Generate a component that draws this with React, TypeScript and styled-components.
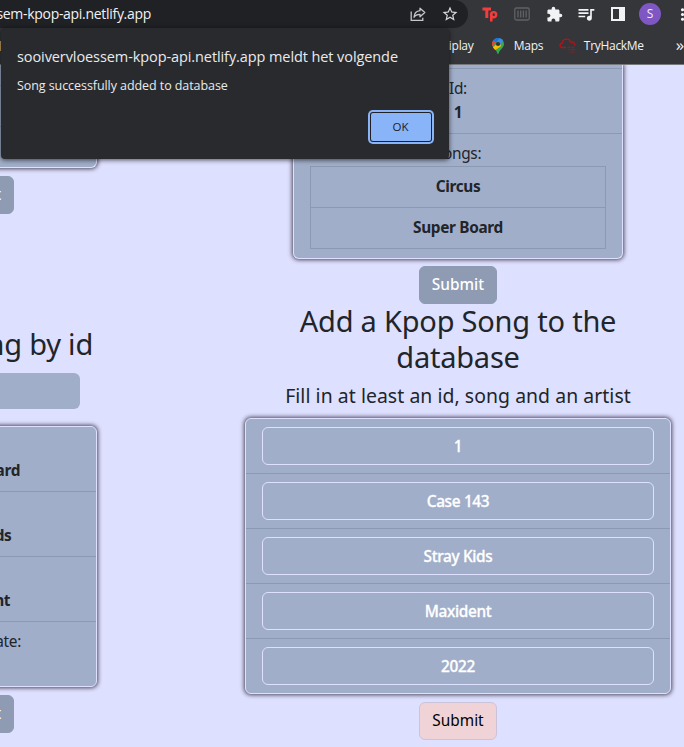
import React from "react";
import styled, { createGlobalStyle } from "styled-components";
import { MdExtension, MdMoreVert, MdQueueMusic, MdStarBorder } from "react-icons/md";

const GlobalStyle = createGlobalStyle`
  * { box-sizing: border-box; }
  body { margin: 0; overflow: hidden; background: #dee0ff; }
`;

const chromeFont = `"Open Sans", "Noto Sans", sans-serif`;
const pageFont = `"Noto Sans", "Open Sans", sans-serif`;

const Window = styled.div`
  position: relative;
  width: 684px;
  height: 747px;
  overflow: hidden;
  display: flex;
  flex-direction: column;
  background: #dee0ff;
`;

/* Browser chrome */

const Header = styled.header`
  flex: none;
  height: 65px;
  background: #35363a;
  border-bottom: 1px solid #77787d;
  font-family: ${chromeFont};
  overflow: hidden;
`;

const Toolbar = styled.div`
  display: flex;
  height: 28px;
`;

const AddressBar = styled.div`
  flex: none;
  display: flex;
  align-items: center;
  width: 468px;
  height: 28px;
  padding-right: 2px;
  margin-right: 6px;
  background: #202124;
  border-radius: 0 14px 14px 0;
`;

const Url = styled.div`
  display: flex;
  justify-content: flex-end;
  width: 151px;
  margin-right: auto;
  color: #f1f3f4;
  font-size: 14px;
  line-height: 28px;
  letter-spacing: -0.3px;
  white-space: nowrap;
`;

const IconSlot = styled.div<{ $color?: string }>`
  flex: none;
  display: flex;
  align-items: center;
  justify-content: center;
  width: 32px;
  height: 28px;
  color: ${(p) => p.$color ?? "#f1f3f4"};
  svg { flex: none; display: block; }
`;

const Avatar = styled.div`
  width: 22px;
  height: 22px;
  border-radius: 50%;
  background: #7e57c2;
  color: #f1ecfa;
  font-size: 12px;
  line-height: 22px;
  text-align: center;
`;

const BookmarkBar = styled.nav`
  display: flex;
  align-items: center;
  height: 36px;
  color: #f1f3f4;
  font-size: 12px;
  line-height: 16px;
  letter-spacing: -0.3px;
  white-space: nowrap;
`;

const FolderEdge = styled.span`
  width: 1px;
  height: 10px;
  margin-right: 448px;
  background: #c9a25c;
`;

const Bookmark = styled.span<{ $width: number }>`
  flex: none;
  display: flex;
  align-items: center;
  width: ${(p) => p.$width}px;
  svg { flex: none; display: block; }
`;

const BookmarkName = styled.span<{ $gap?: number }>`
  margin-left: ${(p) => p.$gap ?? 0}px;
`;

const Overflow = styled.span`
  font-size: 17px;
  line-height: 16px;
  margin-top: -3px;
`;

/* Alert */

const Dialog = styled.section`
  position: absolute;
  z-index: 2;
  left: 1px;
  top: 28px;
  width: 448px;
  height: 131px;
  padding: 18px 15px 14px 16px;
  display: flex;
  flex-direction: column;
  background: #292a2d;
  border-radius: 4px;
  box-shadow: 0 1px 5px rgba(0, 0, 0, 0.65);
  color: #e8eaed;
  font-family: ${chromeFont};
`;

const DialogTitle = styled.h1`
  margin: 0;
  font-size: 14.5px;
  font-weight: 400;
  line-height: 22px;
  letter-spacing: -0.09px;
  white-space: nowrap;
`;

const DialogText = styled.p`
  margin: 9px 0 0;
  font-size: 12.5px;
  line-height: 18px;
  letter-spacing: -0.07px;
`;

const OkButton = styled.button`
  width: 60px;
  height: 28px;
  margin: auto 3px 4px auto;
  padding: 0 1px 0 0;
  border: 0;
  border-radius: 2px;
  background: #8ab4f8;
  box-shadow: 0 0 0 1px #202124, 0 0 0 3px #8ab4f8;
  color: #202124;
  font: 400 11.5px/28px ${chromeFont};
`;

/* Page */

const Page = styled.main`
  flex: 1;
  min-height: 0;
  display: flex;
  overflow: hidden;
  color: #212529;
  font-family: ${pageFont};
  font-size: 15.4px;
  line-height: 24px;
`;

const LeftColumn = styled.div`
  flex: none;
  width: 97px;
  display: flex;
  flex-direction: column;
  align-items: flex-end;
`;

const RightColumn = styled.div`
  flex: none;
  width: 426px;
  margin-left: 148px;
  display: flex;
  flex-direction: column;
  align-items: center;
`;

const Card = styled.div<{ $width: number; $cutTop?: boolean }>`
  flex: none;
  width: ${(p) => p.$width}px;
  overflow: hidden;
  background: #a1aec9;
  border: 1px solid #dee0ff;
  border-top-width: ${(p) => (p.$cutTop ? 0 : 1)}px;
  border-radius: ${(p) => (p.$cutTop ? "0 0 6px 6px" : "6px")};
  box-shadow: 0 0 4px 1px rgba(38, 30, 45, 0.8);
`;

const Row = styled.div<{ $height: number }>`
  height: ${(p) => p.$height}px;
  padding: 8px 16px;
  text-align: center;
  border-bottom: 1px solid #8b99b3;
  white-space: nowrap;
  &:last-child { border-bottom: 0; }
`;

const BlankRow = styled(Row)`
  padding: 0;
`;

const Label = styled.div`
  height: 24px;
  letter-spacing: -0.3px;
`;

const Value = styled(Label)`
  font-weight: 700;
`;

const SongTable = styled.div`
  display: flex;
  flex-direction: column;
  border: 1px solid #8b99b3;
`;

const SongRow = styled.div`
  height: 41px;
  line-height: 40px;
  font-weight: 700;
  letter-spacing: -0.34px;
  border-bottom: 1px solid #8b99b3;
  &:last-child { height: 40px; border-bottom: 0; }
`;

const Button = styled.button<{ $pink?: boolean; $top: number }>`
  flex: none;
  width: 78px;
  height: 38px;
  margin: ${(p) => p.$top}px 0 0;
  padding: 0;
  border: 1px solid ${(p) => (p.$pink ? "#cdc3d8" : "#8e9bb2")};
  border-radius: 6px;
  background: ${(p) => (p.$pink ? "#efd3d7" : "#8e9bb2")};
  color: ${(p) => (p.$pink ? "#000" : "#fff")};
  font: ${(p) => (p.$pink ? 400 : 500)} 15.4px/36px ${pageFont};
`;

const LeftButton = styled(Button)`
  margin-right: 83px;
`;

const Heading = styled.h2<{ $top: number; $right?: number }>`
  flex: none;
  margin: ${(p) => p.$top}px ${(p) => p.$right ?? 0}px 0 0;
  font-size: 29px;
  font-weight: 400;
  line-height: 36px;
  letter-spacing: -0.22px;
  text-align: center;
  white-space: nowrap;
`;

const Subheading = styled.h5`
  margin: 9px 0 10px;
  font-size: 19.4px;
  font-weight: 400;
  line-height: 24px;
  letter-spacing: 0.06px;
  white-space: nowrap;
`;

const IdField = styled.div`
  flex: none;
  width: 160px;
  height: 36px;
  margin: 11px 17px 17px 0;
  border-radius: 6px;
  background: #a1aec9;
`;

const Field = styled.input`
  display: block;
  width: 100%;
  height: 38px;
  padding: 0;
  border: 1px solid #dee0ff;
  border-radius: 6px;
  background: transparent;
  color: #fff;
  font: 500 15.4px/24px ${pageFont};
  letter-spacing: -0.35px;
  -webkit-text-stroke: 0.3px #fff;
  text-align: center;
`;

function ShareIcon() {
  return (
    <svg width="16" height="16" viewBox="0 0 16 16" fill="none" stroke="#c4c7ca" strokeWidth="1.3">
      <path d="M1.2 5.5v8.8h11.6v-2.6" />
      <path d="M10 2.2l4.8 4.3-4.8 4.3V8.3C7 8.3 5.2 9.2 4 11.3 4.3 7.5 6.5 5 10 4.7z" strokeLinejoin="round" />
    </svg>
  );
}

function TypeLogo() {
  return (
    <svg width="16" height="16" viewBox="0 0 16 16" fill="none" stroke="#f33c3c" strokeWidth="3">
      <path d="M.5 3h8.5M4.8 3v9" />
      <path d="M9.3 15.5V7" strokeWidth="2.6" />
      <circle cx="11.6" cy="8.7" r="2.6" strokeWidth="2.4" />
    </svg>
  );
}

function BarsIcon() {
  return (
    <svg width="16" height="14" viewBox="0 0 16 14" fill="none" stroke="#606165" strokeWidth="1.3">
      <rect x=".8" y="1" width="14.4" height="12" rx="1.5" />
      <path d="M4 3.5v7M6.7 3.5v7M9.4 3.5v7M12.1 3.5v7" />
    </svg>
  );
}

function SidePanelIcon() {
  return (
    <svg width="14" height="14" viewBox="0 0 14 14">
      <path fill="#f1f3f4" fillRule="evenodd" d="M0 0h14v14H0zM2 2v10h6V2z" />
    </svg>
  );
}

function MapPin() {
  return (
    <svg width="12" height="16" viewBox="0 0 12 16">
      <path fill="#34a853" d="M6 0a6 6 0 0 1 6 6c0 4-4.5 5.5-5.3 9.3-.2.9-1.2.9-1.4 0C4.5 11.5 0 10 0 6a6 6 0 0 1 6-6z" />
      <path fill="#fbbc04" d="M.9 9.200L8 3.200l1 5L3.300 12C2.500 11 1.500 10.300.9 9.200z" />
      <path fill="#ea4335" d="M1.400 2.200L4 4.400.5 8.300A6 6 0 0 1 1.400 2.200z" />
      <path fill="#1a73e8" d="M1.400 2.200A6 6 0 0 1 7.800.3L4 4.600z" />
      <path fill="#4285f4" d="M7.800.3a6 6 0 0 1 3.400 2.800L7.800 7.200 6 3z" />
      <circle cx="6" cy="6" r="2.1" fill="#303236" />
    </svg>
  );
}

function CloudLogo() {
  return (
    <svg width="17" height="16" viewBox="0 0 17 16" fill="none" stroke="#b3141b" strokeWidth="1.3">
      <path d="M7 9.500H3.500C.3 9.500.1 5.500 3.300 5.200 3.300.2 10.600-.3 11.300 4c3-.6 4.800 1.200 4.200 3.700" />
      <path d="M8.500 9.300h3M12.500 9.300h3M9 11.700h2M12 11.700h4M10 14h1.500M12.500 14h3" strokeWidth="1" opacity=".75" />
    </svg>
  );
}

const formValues = ["1", "Case 143", "Stray Kids", "Maxident", "2022"];

export default function App() {
  return (
    <Window>
      <GlobalStyle />
      <Header>
        <Toolbar>
          <AddressBar>
            <Url>sem-kpop-api.netlify.app</Url>
            <IconSlot><ShareIcon /></IconSlot>
            <IconSlot $color="#d5d7da"><MdStarBorder size={18} /></IconSlot>
          </AddressBar>
          <IconSlot><TypeLogo /></IconSlot>
          <IconSlot><BarsIcon /></IconSlot>
          <IconSlot><MdExtension size={17} /></IconSlot>
          <IconSlot><MdQueueMusic size={20} /></IconSlot>
          <IconSlot><SidePanelIcon /></IconSlot>
          <IconSlot><Avatar>S</Avatar></IconSlot>
          <IconSlot><MdMoreVert size={19} /></IconSlot>
        </Toolbar>
        <BookmarkBar>
          <FolderEdge />
          <Bookmark $width={43}><BookmarkName>iplay</BookmarkName></Bookmark>
          <Bookmark $width={67}><MapPin /><BookmarkName $gap={10}>Maps</BookmarkName></Bookmark>
          <Bookmark $width={117}><CloudLogo /><BookmarkName $gap={8}>TryHackMe</BookmarkName></Bookmark>
          <Overflow>»</Overflow>
        </BookmarkBar>
      </Header>

      <Dialog role="alertdialog">
        <DialogTitle>sooivervloessem-kpop-api.netlify.app meldt het volgende</DialogTitle>
        <DialogText>Song successfully added to database</DialogText>
        <OkButton>OK</OkButton>
      </Dialog>

      <Page>
        <LeftColumn>
          <Card $width={244} $cutTop>
            <BlankRow $height={21} />
            <BlankRow $height={41} />
            <BlankRow $height={40} />
          </Card>
          <LeftButton $top={8}>Submit</LeftButton>
          <Heading $top={112} $right={4}>Get a Kpop Song by id</Heading>
          <IdField />
          <Card $width={244}>
            <Row $height={65}><Label>Song:</Label><Value>Super Board</Value></Row>
            <Row $height={65}><Label>Artist:</Label><Value>Stray Kids</Value></Row>
            <Row $height={65}><Label>Album:</Label><Value>Maxident</Value></Row>
            <Row $height={64}><Label>Release date:</Label></Row>
          </Card>
          <LeftButton $top={8}>Submit</LeftButton>
        </LeftColumn>

        <RightColumn>
          <Card $width={330} $cutTop>
            <BlankRow $height={4} />
            <Row $height={65}><Label>Id:</Label><Value>1</Value></Row>
            <Row $height={124}>
              <Label>Songs:</Label>
              <SongTable>
                <SongRow>Circus</SongRow>
                <SongRow>Super Board</SongRow>
              </SongTable>
            </Row>
          </Card>
          <Button $top={7}>Submit</Button>
          <Heading $top={-1}>Add a Kpop Song to the<br />database</Heading>
          <Subheading>Fill in at least an id, song and an artist</Subheading>
          <Card $width={426}>
            {formValues.map((value, i) => (
              <Row key={value} $height={i === formValues.length - 1 ? 54 : 55}>
                <Field defaultValue={value} />
              </Row>
            ))}
          </Card>
          <Button $pink $top={8}>Submit</Button>
        </RightColumn>
      </Page>
    </Window>
  );
}
